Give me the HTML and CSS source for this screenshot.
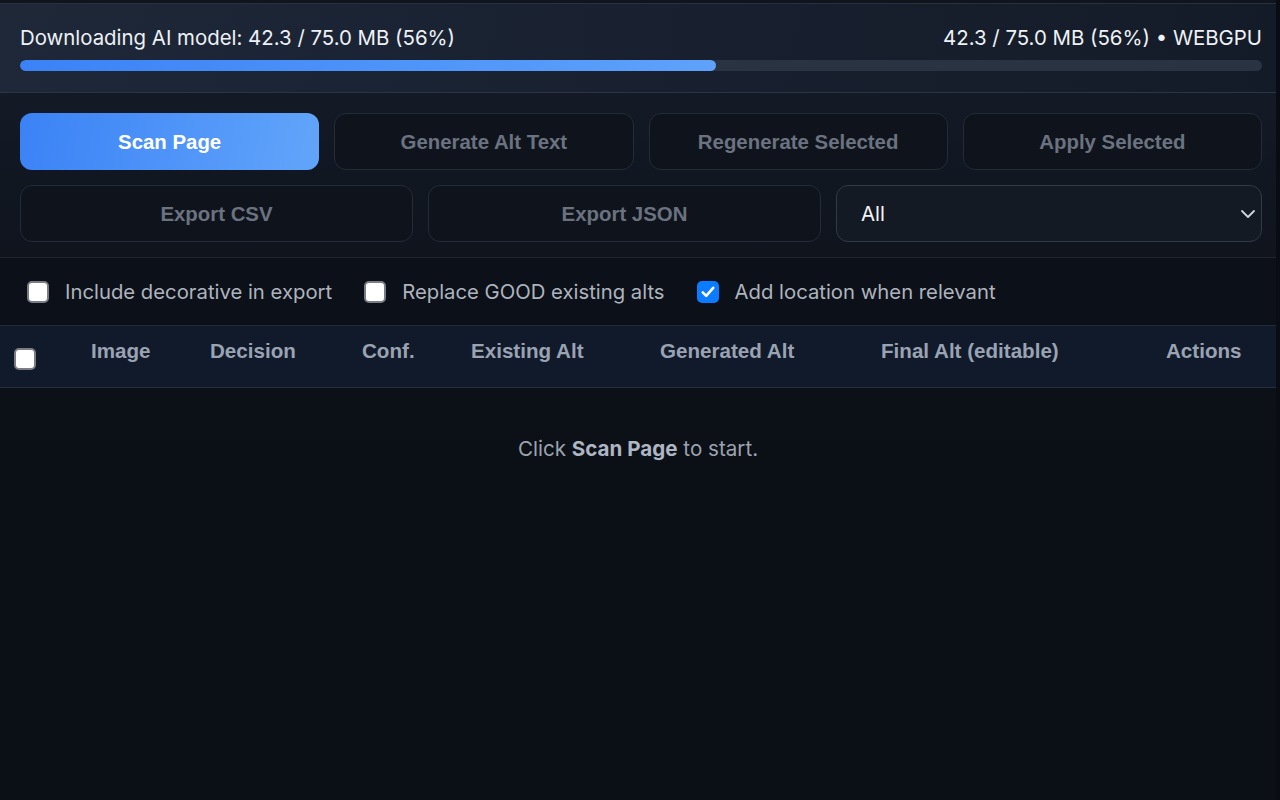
FILE: index.html
```html
<!DOCTYPE html>
<html lang="en">
<head>
    <meta charset="UTF-8">
    <meta name="viewport" content="width=device-width, initial-scale=1.0">
    <title>Alt Text Assistant</title>
    <link rel="stylesheet" href="styles.css">
</head>
<body>
    <div class="app">
        <!-- Model download status -->
        <section class="progress-panel">
            <div class="progress-row">
                <span class="progress-label">Downloading AI model: 42.3 / 75.0 MB (56%)</span>
                <span class="progress-meta">42.3 / 75.0 MB (56%) &bull; WEBGPU</span>
            </div>
            <div class="progress-track">
                <div class="progress-fill" style="width: 56%"></div>
            </div>
        </section>

        <!-- Actions -->
        <section class="toolbar">
            <div class="btn-row btn-row--four">
                <button class="btn btn--primary">Scan Page</button>
                <button class="btn" disabled>Generate Alt Text</button>
                <button class="btn" disabled>Regenerate Selected</button>
                <button class="btn" disabled>Apply Selected</button>
            </div>
            <div class="btn-row btn-row--three">
                <button class="btn" disabled>Export CSV</button>
                <button class="btn" disabled>Export JSON</button>
                <div class="select-wrap">
                    <select class="filter">
                        <option>All</option>
                        <option>Decorative</option>
                        <option>Informative</option>
                    </select>
                    <svg class="chevron" width="16" height="10" viewBox="0 0 16 10">
                        <path d="M2 2 L8 8 L14 2" fill="none" stroke="#cbd5e1" stroke-width="1.8" stroke-linecap="round" stroke-linejoin="round"/>
                    </svg>
                </div>
            </div>
        </section>

        <!-- Options -->
        <section class="options">
            <label class="check">
                <span class="box"></span>
                Include decorative in export
            </label>
            <label class="check">
                <span class="box"></span>
                Replace GOOD existing alts
            </label>
            <label class="check">
                <span class="box box--on">
                    <svg width="14" height="12" viewBox="0 0 14 12">
                        <path d="M1.8 6.4 L5.2 9.8 L12.2 1.8" fill="none" stroke="#fff" stroke-width="2.6" stroke-linecap="round" stroke-linejoin="round"/>
                    </svg>
                </span>
                Add location when relevant
            </label>
        </section>

        <!-- Results table -->
        <div class="table-head">
            <div class="th th--check"><span class="box"></span></div>
            <div class="th">Image</div>
            <div class="th">Decision</div>
            <div class="th">Conf.</div>
            <div class="th">Existing Alt</div>
            <div class="th">Generated Alt</div>
            <div class="th">Final Alt (editable)</div>
            <div class="th">Actions</div>
        </div>

        <div class="empty">Click <strong>Scan Page</strong> to start.</div>
    </div>
</body>
</html>
```

FILE: styles.css
```css
/* Page */
html {
    background-color: #090c12;
}

body {
    margin: 0;
    padding: 0;
    min-height: 800px;
    background-color: #090c12;
    font-family: Inter, "Noto Sans", sans-serif;
    color: #e5e7eb;
}

.app {
    width: 1276px;
    min-height: 800px;
    padding-top: 3px;
    box-sizing: border-box;
    background: linear-gradient(180deg, #0f141d 0%, #0b0f16 60%, #0b0f16 100%);
}

/* Download progress panel */
.progress-panel {
    padding: 22px 14px 21px 20px;
    border-top: 1px solid #283141;
    border-bottom: 1px solid #2b3444;
    background: linear-gradient(100deg, #1e2839 0%, #18202f 55%, #141b28 100%);
}

.progress-row {
    display: flex;
    justify-content: space-between;
    align-items: center;
    font-size: 20.4px;
    line-height: 24px;
    color: #eef1f5;
}

.progress-track {
    margin-top: 10px;
    height: 11px;
    border-radius: 6px;
    background-color: #2a3342;
    overflow: hidden;
}

.progress-fill {
    height: 100%;
    border-radius: 6px;
    background: linear-gradient(90deg, #3b82f6, #5ea2fb);
}

/* Toolbar */
.toolbar {
    display: flex;
    flex-direction: column;
    gap: 15px;
    padding: 20px 14px 15px 20px;
    border-bottom: 1px solid #1f2632;
    background: linear-gradient(180deg, #131a26 0%, #0f141d 100%);
}

.btn-row {
    display: grid;
    gap: 15px;
}

.btn-row--four {
    grid-template-columns: repeat(4, 1fr);
}

.btn-row--three {
    grid-template-columns: 393px 393px 1fr;
}

.btn {
    height: 57px;
    padding-top: 2px;
    border: 1px solid #232b37;
    border-radius: 12px;
    background-color: #0f141c;
    color: #6b7280;
    font-family: "Liberation Sans", Arial, sans-serif;
    font-weight: bold;
    font-size: 20.4px;
    cursor: pointer;
}

.btn:disabled {
    cursor: default;
}

.btn--primary {
    border: none;
    background: linear-gradient(100deg, #3b82f6 0%, #61a5fa 100%);
    color: #ffffff;
}

.select-wrap {
    position: relative;
}

.filter {
    width: 100%;
    height: 57px;
    padding: 0 24px;
    appearance: none;
    -webkit-appearance: none;
    border: 1px solid #323a47;
    border-radius: 12px;
    background-color: #141a24;
    color: #f3f4f6;
    font-family: Inter, "Noto Sans", sans-serif;
    font-size: 20.4px;
}

.chevron {
    position: absolute;
    right: 6px;
    top: 24px;
    pointer-events: none;
}

/* Option checkboxes */
.options {
    display: flex;
    align-items: center;
    height: 67px;
    padding: 0 27px;
    gap: 32px;
    border-bottom: 1px solid #232b37;
    background-color: #0c1018;
}

.check {
    display: flex;
    align-items: center;
    gap: 16px;
    font-size: 20.3px;
    color: #aeb4be;
    cursor: pointer;
}

.box {
    display: inline-flex;
    align-items: center;
    justify-content: center;
    width: 22px;
    height: 22px;
    box-sizing: border-box;
    border: 2px solid #7a7d83;
    border-radius: 5px;
    background-color: #ffffff;
}

.box--on {
    border: none;
    background-color: #0b7bff;
}

/* Table header */
.table-head {
    display: grid;
    grid-template-columns: 91px 119px 152px 109px 189px 221px 285px 1fr;
    align-items: center;
    height: 61px;
    border-bottom: 1px solid #262f3d;
    background-color: #111a2a;
}

.th {
    padding-bottom: 11px;
    font-family: "Liberation Sans", Arial, sans-serif;
    font-weight: bold;
    font-size: 20.6px;
    color: #9aa3b2;
}

.th--check {
    display: flex;
    padding-left: 14px;
    padding-bottom: 0;
    padding-top: 4px;
}

/* Empty state */
.empty {
    padding-top: 49px;
    text-align: center;
    font-size: 20.6px;
    line-height: 24px;
    color: #9ca3af;
}

.empty strong {
    color: #aeb6c4;
    font-weight: 700;
}
```
